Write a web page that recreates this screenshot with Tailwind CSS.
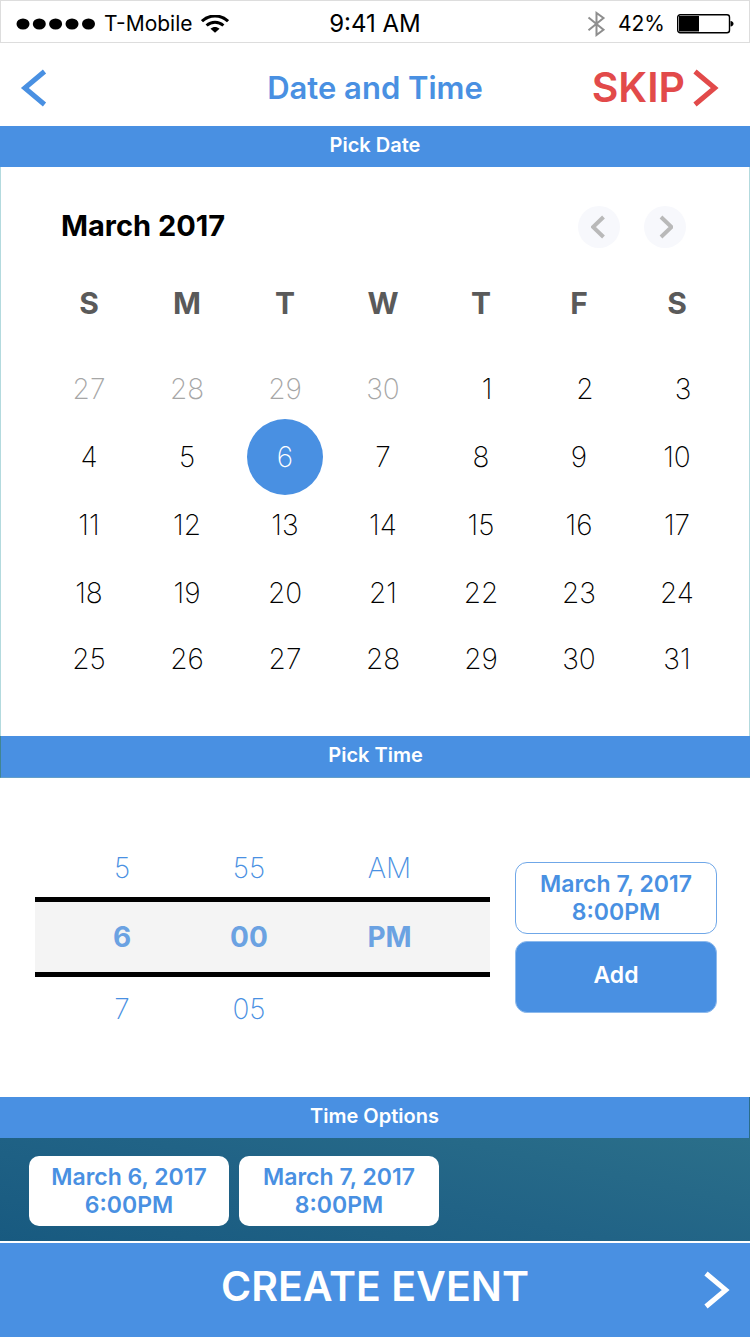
<!DOCTYPE html>
<html lang="en">
<head>
<meta charset="utf-8">
<meta name="viewport" content="width=device-width, initial-scale=1">
<title>Date and Time</title>
<script src="https://cdn.jsdelivr.net/npm/@tailwindcss/browser@4"></script>
</head>
<body class="flex min-h-screen flex-col bg-white font-['Inter','Open_Sans',sans-serif] text-[#4990e2]">

<!-- Status bar -->
<div class="grid h-[43px] grid-cols-3 items-center border border-[#dddddd] pt-1 pr-[15px] pl-[15px] text-black">
  <div class="flex items-center text-[21px]">
    <svg class="mr-2 h-3 w-20" viewBox="0 0 80 12" fill="currentColor" aria-hidden="true"><ellipse cx="7" cy="6" rx="6.5" ry="5.6"/><ellipse cx="23.300" cy="6" rx="6.500" ry="5.600"/><ellipse cx="39.600" cy="6" rx="6.500" ry="5.600"/><ellipse cx="56" cy="6" rx="6.500" ry="5.600"/><ellipse cx="72.500" cy="6" rx="6.500" ry="5.600"/></svg>
    <span>T-Mobile</span>
    <svg class="ml-2 h-[18px] w-7" viewBox="0 0 28 18" fill="none" stroke="currentColor" stroke-width="3" aria-hidden="true"><path d="M1 6.200C8.500-.8 19.500-.8 27 6.200"/><path d="M5.600 10.500C10.500 6 17.500 6 22.400 10.500"/><path d="M9.500 13.800C12.300 11.300 15.700 11.300 18.500 13.800L14 17.800Z" fill="currentColor" stroke="none"/></svg>
  </div>
  <div class="text-center text-2xl">9:41 AM</div>
  <div class="flex items-center justify-end text-[21px]">
    <svg class="mr-3 h-[26px] w-5" viewBox="0 0 20 26" fill="none" stroke="#8e8e8e" stroke-width="2" aria-hidden="true"><path d="M2.500 6.500L17.500 18.700L10.500 24V2L17.500 7L2.500 19.200"/></svg>
    <span>42%</span>
    <svg class="ml-3 h-5 w-[57px]" viewBox="0 0 57 20" aria-hidden="true"><rect x="0.700" y="0.700" width="51.800" height="18" rx="2.500" fill="none" stroke="#000" stroke-width="1.400"/><path d="M2 2H22V17.500H2Z"/><path d="M53.500 7C57.500 7.500 57.500 12 53.500 12.500Z"/></svg>
  </div>
</div>

<!-- Navigation -->
<header class="grid h-[83px] grid-cols-[1fr_auto_1fr] items-center px-5 pt-1.5">
  <button type="button" aria-label="Back" class="justify-self-start"><svg class="h-[38px] w-7" viewBox="0 0 28 38" fill="none" stroke="currentColor" stroke-width="5" aria-hidden="true"><path d="M24.500 2.500L4.800 19L24.500 35.500"/></svg></button>
  <h1 class="text-[31px] leading-9 font-semibold">Date and Time</h1>
  <button type="button" class="mr-[11px] flex items-center gap-2 justify-self-end text-[41px] leading-none font-semibold text-[#e24a4a]">SKIP<svg class="h-[38px] w-[26px]" viewBox="0 0 26 38" fill="none" stroke="currentColor" stroke-width="5" aria-hidden="true"><path d="M2 2.500L21.700 19L2 35.500"/></svg></button>
</header>

<main>
  <section class="border-x border-[#b3dade]">
    <h2 class="-mx-px flex h-[41px] items-center justify-center bg-[#4990e2] pb-1 text-xl font-semibold text-white">Pick Date</h2>
    <div class="pr-[23px] pb-[45px] pl-[39px]">
      <div class="flex h-[84px] items-center pt-[35px] pr-10 pl-[21px]">
        <h3 class="mr-auto pb-0.5 text-[29px] leading-9 font-bold text-black">March 2017</h3>
        <div class="flex gap-6">
          <button type="button" aria-label="Previous month" class="flex size-[42px] items-center justify-center rounded-full bg-[#f7f8fc] text-[#b9b9b9]"><svg class="h-6 w-4" viewBox="0 0 16 24" fill="none" stroke="currentColor" stroke-width="4" aria-hidden="true"><path d="M12.500 2L2 12L12.500 22"/></svg></button>
          <button type="button" aria-label="Next month" class="flex size-[42px] items-center justify-center rounded-full bg-[#f7f8fc] text-[#b9b9b9]"><svg class="h-6 w-4" viewBox="0 0 16 24" fill="none" stroke="currentColor" stroke-width="4" aria-hidden="true"><path d="M4 2L14.500 12L4 22"/></svg></button>
        </div>
      </div>
      <table class="w-full table-fixed text-center text-[28px] leading-8 font-extralight text-black">
        <thead>
          <tr class="h-[104px] text-[30px] text-[#5a5a5a]">
            <th scope="col" class="font-bold">S</th><th scope="col" class="font-bold">M</th><th scope="col" class="font-bold">T</th><th scope="col" class="font-bold">W</th><th scope="col" class="font-bold">T</th><th scope="col" class="font-bold">F</th><th scope="col" class="font-bold">S</th>
          </tr>
        </thead>
        <tbody>
          <tr class="h-[68px]"><td class="text-[#a6a6a6]">27</td><td class="text-[#a6a6a6]">28</td><td class="text-[#a6a6a6]">29</td><td class="text-[#a6a6a6]">30</td><td class="pl-3">1</td><td class="pl-3">2</td><td class="pl-3">3</td></tr>
          <tr class="h-[68px]"><td>4</td><td>5</td><td><button type="button" aria-pressed="true" class="-my-1 inline-flex size-[76px] items-center justify-center rounded-full bg-[#4990e2] align-middle text-white">6</button></td><td>7</td><td>8</td><td>9</td><td>10</td></tr>
          <tr class="h-[68px]"><td>11</td><td>12</td><td>13</td><td>14</td><td>15</td><td>16</td><td>17</td></tr>
          <tr class="h-[68px]"><td>18</td><td>19</td><td>20</td><td>21</td><td>22</td><td>23</td><td>24</td></tr>
          <tr class="h-16"><td>25</td><td>26</td><td>27</td><td>28</td><td>29</td><td>30</td><td>31</td></tr>
        </tbody>
      </table>
    </div>
  </section>

  <section>
    <h2 class="flex h-[42px] items-center justify-center border-b border-l border-b-[#649fc8] border-l-[#418592] bg-[#4990e2] pb-1 text-xl font-semibold text-white">Pick Time</h2>
    <div class="flex items-center gap-[25px] py-[60px] pr-[33px] pl-[35px]">
      <div class="min-w-0 flex-1 text-[28px] font-extralight">
        <div class="grid h-[59px] grid-cols-[174fr_80fr_201fr]"><button type="button">5</button><button type="button">55</button><button type="button">AM</button></div>
        <div class="grid h-[80px] grid-cols-[174fr_80fr_201fr] border-y-5 border-black bg-[#f4f4f4] font-bold text-[#6ba2e2]"><button type="button">6</button><button type="button">00</button><button type="button">PM</button></div>
        <div class="grid h-[60px] grid-cols-[174fr_80fr_201fr] pt-1"><button type="button">7</button><button type="button">05</button></div>
      </div>
      <div class="flex w-[202px] flex-col gap-[7px] text-[23px] leading-7 font-semibold">
        <div class="rounded-xl border border-[#6fa7e8] py-[7px] text-center">March 7, 2017<br>8:00PM</div>
        <button type="button" class="h-[72px] rounded-xl border border-[#8dbaed] bg-[#4990e2] pb-1 text-white">Add</button>
      </div>
    </div>
  </section>

  <section class="bg-[#2a6d8a]">
    <h2 class="mr-px flex h-[41px] items-center justify-center bg-[#4990e2] pb-1 text-xl font-semibold text-white">Time Options</h2>
    <div class="flex gap-2.5 bg-linear-[12deg] from-[#185a80] via-[#216386] to-[#2b6f8a] px-[29px] pt-[18px] pb-[15px] text-[23px] leading-7 font-semibold">
      <button type="button" class="h-[70px] w-[200px] rounded-[10px] bg-white">March 6, 2017<br>6:00PM</button>
      <button type="button" class="h-[70px] w-[200px] rounded-[10px] bg-white">March 7, 2017<br>8:00PM</button>
    </div>
  </section>
</main>

<button type="button" class="grid min-h-24 flex-1 grid-cols-[1fr_auto_1fr] items-center border-t-2 border-white bg-[#4990e2] pr-5 pl-5 text-[41px] font-semibold text-white">
  <span class="col-start-2 pb-[7px]">CREATE EVENT</span>
  <svg class="h-[38px] w-[26px] justify-self-end" viewBox="0 0 26 38" fill="none" stroke="currentColor" stroke-width="5" aria-hidden="true"><path d="M2 2.500L21.700 19L2 35.500"/></svg>
</button>
</body>
</html>
